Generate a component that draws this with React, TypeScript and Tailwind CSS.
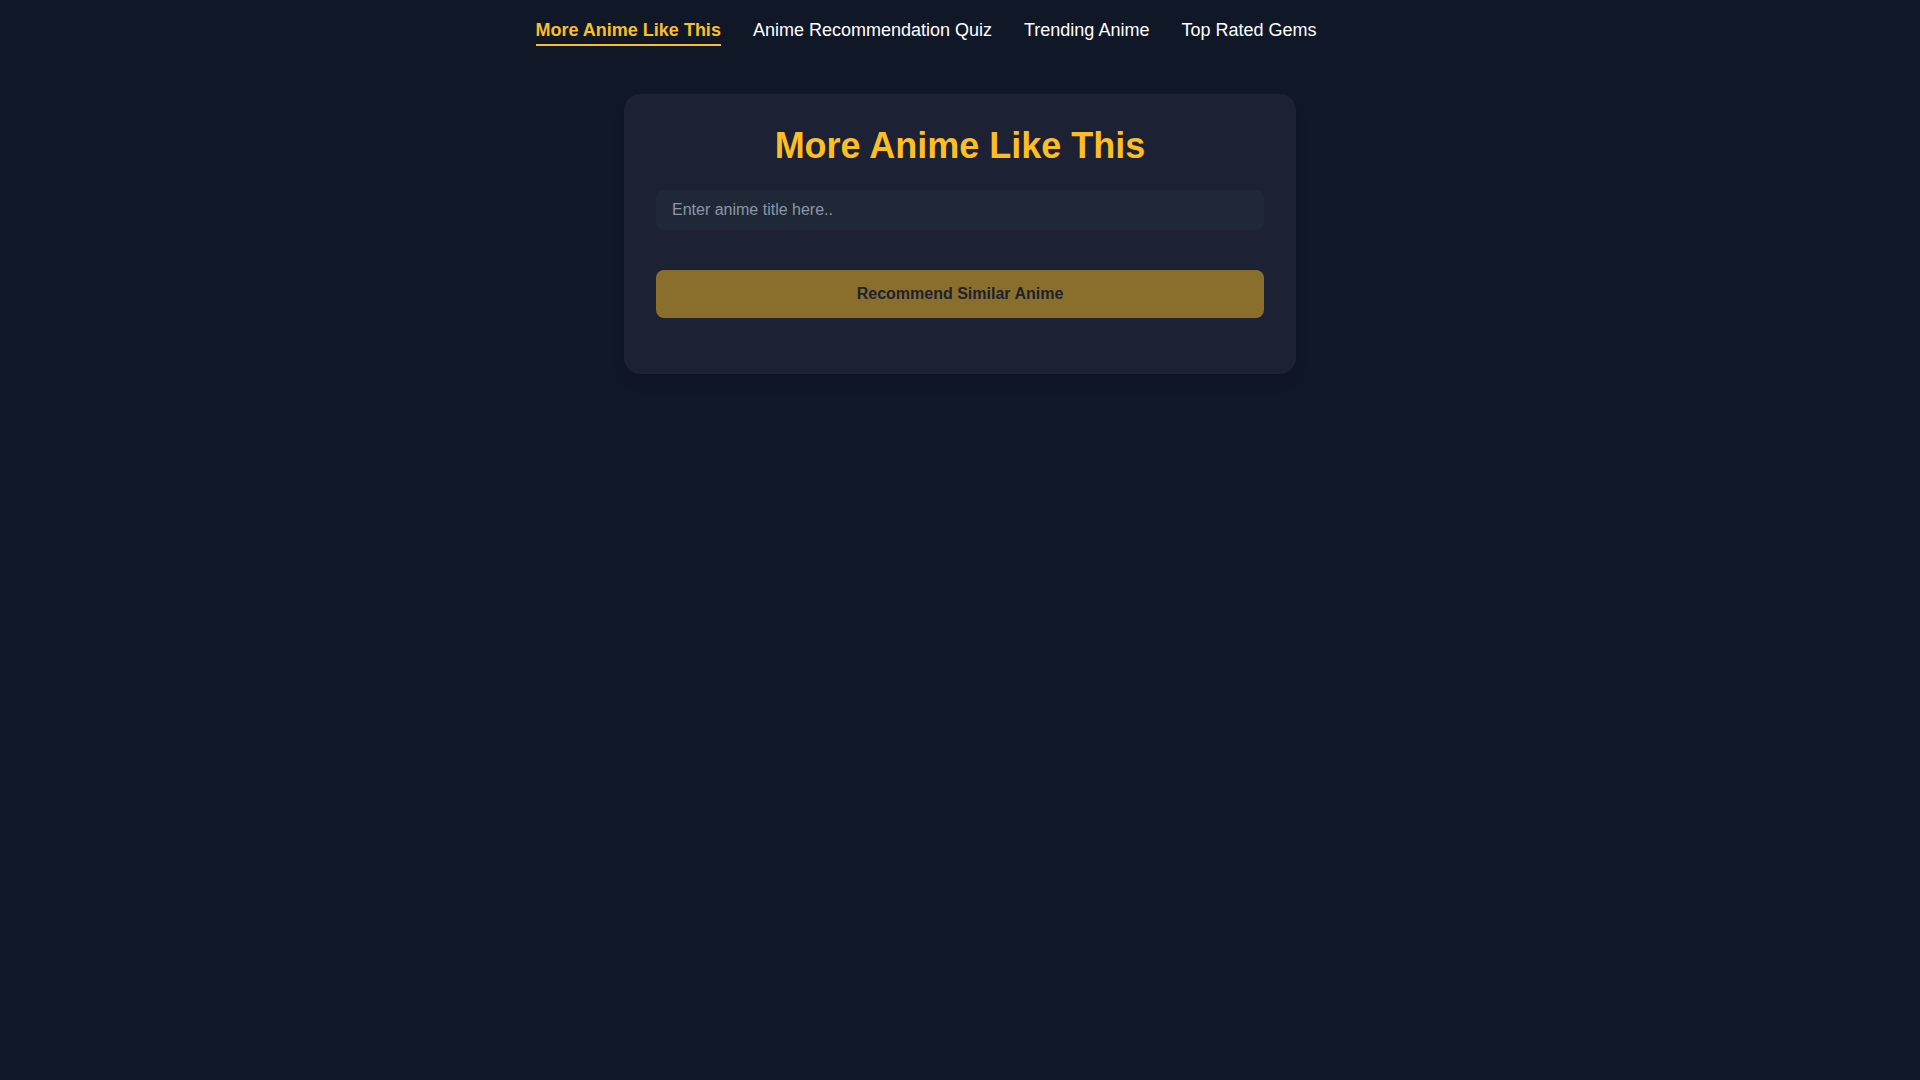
import { useState } from "react";

const navItems = [
  "More Anime Like This",
  "Anime Recommendation Quiz",
  "Trending Anime",
  "Top Rated Gems",
];

export default function App(): React.JSX.Element {
  const [active, setActive] = useState(0);
  const [title, setTitle] = useState("");

  return (
    <div className="min-h-screen bg-[#101828] font-['Liberation_Sans',Arial,sans-serif] text-white">
      <nav className="flex justify-center gap-8 pr-[68px] pt-4">
        {navItems.map((item, i) => (
          <button
            key={item}
            type="button"
            onClick={() => setActive(i)}
            className={
              i === active
                ? "border-b-2 border-[#fbbf24] text-lg font-bold leading-7 text-[#fbbf24]"
                : "border-b-2 border-transparent text-lg leading-7 text-white"
            }
          >
            {item}
          </button>
        ))}
      </nav>

      <main className="mx-auto mt-12 w-[672px] rounded-2xl bg-[#1c2133] p-8 pb-14 shadow-lg">
        <h1 className="text-center text-4xl font-bold leading-10 text-[#fbbf24]">
          More Anime Like This
        </h1>

        <input
          type="text"
          value={title}
          onChange={(e) => setTitle(e.target.value)}
          placeholder="Enter anime title here.."
          className="mt-6 h-10 w-full rounded-lg bg-[#1f2837] px-4 text-base text-white outline-none placeholder:text-[#8d96a5]"
        />

        <button
          type="button"
          disabled={!title}
          className="mt-10 h-12 w-full rounded-lg bg-[#8a6f2c] text-base font-bold text-[#1c2133]"
        >
          Recommend Similar Anime
        </button>
      </main>
    </div>
  );
}
